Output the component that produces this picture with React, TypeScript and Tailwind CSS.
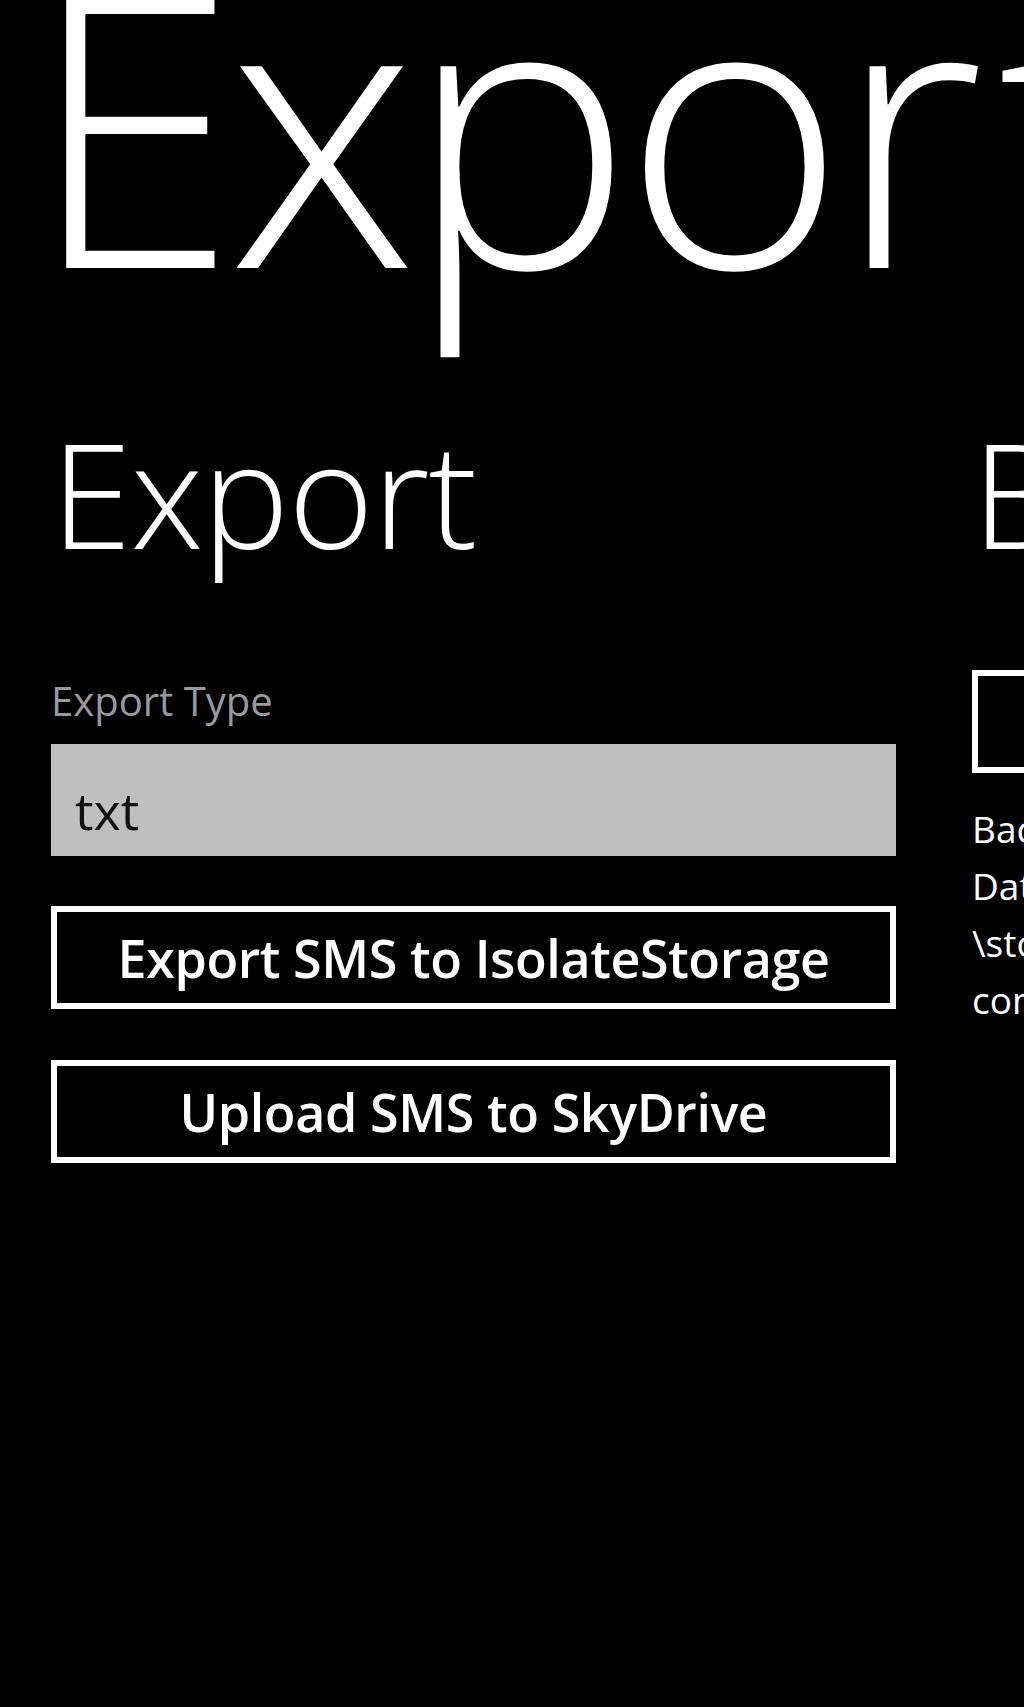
export default function App() {
  return (
    <div className="relative w-[1024px] h-[1707px] overflow-hidden bg-black text-white font-['Open_Sans',sans-serif]">
      <h1 className="ml-[28px] -mt-[69px] whitespace-nowrap text-[380px] leading-[380px] tracking-[-10px] font-light">
        Expor<span className="ml-[24px]">t</span>
      </h1>

      <div className="flex gap-[76px] pl-[51px]">
        <section className="w-[845px] shrink-0">
          <h2 className="mt-[109px] text-[146px] leading-[146px] tracking-[-1px] font-light whitespace-nowrap">
            Export
          </h2>
          <div className="mt-[115px] text-[40px] leading-[40px] text-[#9a9a9a]">Export Type</div>
          <div className="mt-[23px] h-[112px] bg-[#bfbfbf] pl-[24px] pt-[40px] text-[52px] leading-[52px] text-[#111]">
            txt
          </div>
          <button className="mt-[50px] flex h-[103px] w-full items-center justify-center border-[6px] border-white text-[52px] leading-[52px] tracking-[-0.4px] font-semibold whitespace-nowrap">
            Export SMS to IsolateStorage
          </button>
          <button className="mt-[51px] flex h-[103px] w-full items-center justify-center border-[6px] border-white text-[52px] leading-[52px] tracking-[-0.4px] font-semibold whitespace-nowrap">
            Upload SMS to SkyDrive
          </button>
        </section>

        <section className="w-[845px] shrink-0">
          <h2 className="mt-[109px] text-[146px] leading-[146px] tracking-[-1px] font-light whitespace-nowrap">
            Backup
          </h2>
          <button className="mt-[104px] flex h-[103px] w-full items-center justify-center border-[6px] border-white text-[52px] leading-[52px] font-semibold whitespace-nowrap">
            Backup SMS
          </button>
          <div className="mt-[27px] text-[37px] leading-[57px] whitespace-nowrap">
            <p>Backup file will be saved to</p>
            <p>Data\Users\DefApps\AppData</p>
            <p>\storage\backup.xml</p>
            <p>complete.</p>
          </div>
        </section>
      </div>
    </div>
  )
}
